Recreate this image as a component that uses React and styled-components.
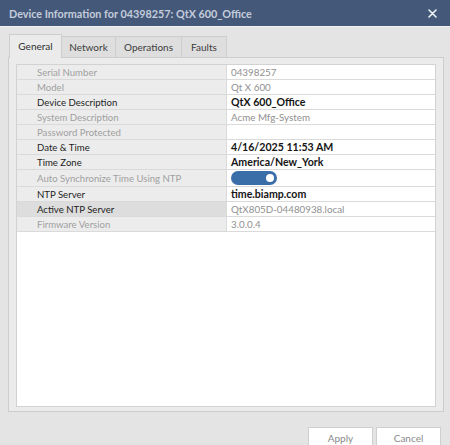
import React from 'react';
import styled, { createGlobalStyle } from 'styled-components';

const GlobalStyle = createGlobalStyle`
  html, body {
    margin: 0;
    padding: 0;
    background: #e4e4e4;
  }
  body {
    font-family: Lato, "Liberation Sans", sans-serif;
    font-size: 10px;
  }
`

const rows = [
  { label: 'Serial Number', value: '04398257', disabled: true },
  { label: 'Model', value: 'Qt X 600', disabled: true },
  { label: 'Device Description', value: 'QtX 600_Office' },
  { label: 'System Description', value: 'Acme Mfg-System', disabled: true },
  { label: 'Password Protected', value: '', disabled: true },
  { label: 'Date & Time', value: '4/16/2025 11:53 AM' },
  { label: 'Time Zone', value: 'America/New_York' },
  { label: 'Auto Synchronize Time Using NTP', toggle: true, disabled: true },
  { label: 'NTP Server', value: 'time.biamp.com' },
  { label: 'Active NTP Server', value: 'QtX805D-04480938.local', disabled: true, labelEnabled: true, selected: true },
  { label: 'Firmware Version', value: '3.0.0.4', disabled: true },
];

const tabs = [
  { name: 'General', width: 53, active: true },
  { name: 'Network', width: 55 },
  { name: 'Operations', width: 67 },
  { name: 'Faults', width: 46 },
];

export default function App() {
  return (
    <>
      <GlobalStyle />
      <Window>
        <TitleBar>
          <Title>Device Information for 04398257: QtX 600_Office</Title>
          <CloseButton>
            <svg width="9" height="9" viewBox="0 0 9 9">
              <path d="M1 1 L8 8 M8 1 L1 8" stroke="#eef1f5" strokeWidth="1.6" strokeLinecap="round" />
            </svg>
          </CloseButton>
        </TitleBar>
        <Body>
          <TabStrip>
            { tabs.map(t => (
              <Tab key={t.name} $active={t.active} $width={t.width}>{t.name}</Tab>
            )) }
          </TabStrip>
          <Panel>
            <Sheet>
              { rows.map(r => (
                <Row key={r.label} $tall={r.toggle}>
                  <Label $disabled={r.disabled && !r.labelEnabled} $selected={r.selected}>
                    {r.label}
                  </Label>
                  <Value $disabled={r.disabled}>
                    { r.toggle ? <Toggle><Knob /></Toggle> : r.value }
                  </Value>
                </Row>
              )) }
            </Sheet>
          </Panel>
          <Footer>
            <Button>Apply</Button>
            <Button>Cancel</Button>
          </Footer>
        </Body>
      </Window>
    </>
  )
}

const Window = styled.div`
  width: 450px;
  height: 445px;
  overflow: hidden;
  display: flex;
  flex-direction: column;
  background: #e4e4e4;
`
const TitleBar = styled.div`
  height: 26px;
  flex: none;
  display: flex;
  align-items: center;
  justify-content: space-between;
  padding: 0 13px 0 9px;
  background: #44587a;
  border-bottom: 1px solid #f2f2f2;
`
const Title = styled.div`
  color: #c4cddb;
  font-weight: 700;
  font-size: 10.8px;
`
const CloseButton = styled.div`
  display: flex;
  align-items: center;
`
const Body = styled.div`
  flex: 1;
  display: flex;
  flex-direction: column;
  padding: 7px 6px 0 8px;
`
const TabStrip = styled.div`
  display: flex;
  align-items: flex-end;
  height: 24px;
  padding-left: 1px;
  position: relative;
  z-index: 1;
  margin-bottom: -1px;
`
const Tab = styled.div`
  width: ${p => p.$width}px;
  height: ${p => p.$active ? 24 : 22}px;
  box-sizing: border-box;
  display: flex;
  align-items: center;
  justify-content: center;
  margin-left: ${p => p.$active ? 0 : -1}px;
  border: 1px solid #cdcdcd;
  border-bottom: ${p => p.$active ? 'none' : '1px solid #cdcdcd'};
  background: ${p => p.$active ? '#ebebeb' : '#dedede'};
  color: ${p => p.$active ? '#2e2e2e' : '#3c3c3c'};
  font-size: 10px;
  padding-bottom: ${p => p.$active ? 2 : 0}px;
  &:first-child { margin-left: 0; }
`
const Panel = styled.div`
  height: 355px;
  box-sizing: border-box;
  display: flex;
  flex-direction: column;
  padding: 6px 7px 4px 7px;
  border: 1px solid #cdcdcd;
  background: #ebebeb;
`
const Sheet = styled.div`
  flex: 1;
  border: 1px solid #d2d2d2;
  background: #ffffff;
`
const Row = styled.div`
  display: grid;
  grid-template-columns: 210px 1fr;
  box-sizing: border-box;
  height: ${p => p.$tall ? 17 : 15}px;
  border-bottom: 1px solid #dadada;
`
const Label = styled.div`
  display: flex;
  align-items: center;
  padding-left: 20px;
  background: ${p => p.$selected ? '#dddddd' : '#ececec'};
  border-right: 1px solid #dadada;
  color: ${p => p.$disabled ? '#a0a0a0' : '#1e1e1e'};
  font-size: 9.6px;
  white-space: nowrap;
`
const Value = styled.div`
  display: flex;
  align-items: center;
  padding-left: 4px;
  color: ${p => p.$disabled ? '#8f8f8f' : '#151515'};
  font-weight: ${p => p.$disabled ? 400 : 700};
  font-size: ${p => p.$disabled ? 9.8 : 10.6}px;
  white-space: nowrap;
`
const Toggle = styled.div`
  width: 46px;
  height: 14px;
  border-radius: 7px;
  background: #3a6ea8;
  display: flex;
  align-items: center;
  justify-content: flex-end;
  padding-right: 3px;
  box-sizing: border-box;
`
const Knob = styled.div`
  width: 8px;
  height: 8px;
  border-radius: 50%;
  background: #ffffff;
`
const Footer = styled.div`
  display: flex;
  justify-content: flex-end;
  gap: 3px;
  margin-top: 15px;
  padding-right: 3px;
`
const Button = styled.div`
  width: 65px;
  height: 22px;
  box-sizing: border-box;
  display: flex;
  align-items: center;
  justify-content: center;
  background: #ffffff;
  border: 1px solid #cfcfcf;
  color: #8a8a8a;
  font-size: 10px;
`
